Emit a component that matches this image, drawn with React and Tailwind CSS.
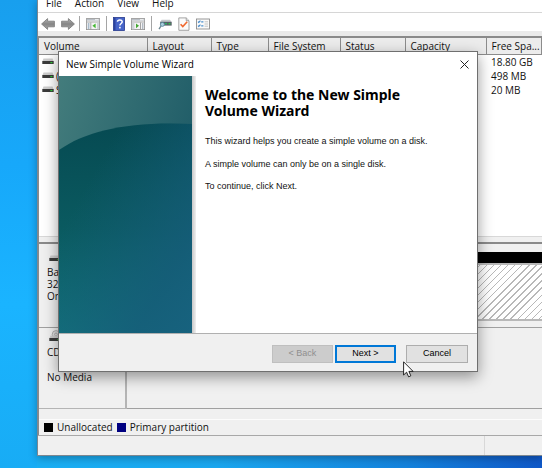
import React from "react";

const menus = ["File", "Action", "View", "Help"];

const columns = [
  { name: "Volume", width: "w-[108px]" },
  { name: "Layout", width: "w-[64px]" },
  { name: "Type", width: "w-[57px]" },
  { name: "File System", width: "w-[72px]" },
  { name: "Status", width: "w-[65px]" },
  { name: "Capacity", width: "w-[81px]" },
  { name: "Free Spa...", width: "w-auto" },
];

const volumes = [
  { name: "", free: "18.80 GB" },
  { name: "(", free: "498 MB" },
  { name: "S", free: "20 MB" },
];

function Arrow({ flip }) {
  return (
    <svg viewBox="0 0 14 12" className={flip ? "h-3 w-3.5 -scale-x-100" : "h-3 w-3.5"}>
      <defs>
        <linearGradient id="arrowFill" x1="0" y1="0" x2="0" y2="1">
          <stop offset="0" stopColor="#b5b5b5" />
          <stop offset="0.5" stopColor="#858585" />
          <stop offset="1" stopColor="#a8a8a8" />
        </linearGradient>
      </defs>
      <path d="M0.6 6 6.6 0.6V3.2H13.4V8.8H6.6V11.4Z" fill="url(#arrowFill)" stroke="#808080" strokeWidth="0.9" strokeLinejoin="round" />
    </svg>
  );
}

function PaneIcon({ right }) {
  return (
    <svg viewBox="0 0 14 12" className="h-3 w-3.5">
      <rect x="0.4" y="0.6" width="13.2" height="11" fill="#f4f4f4" stroke="#8f8f8f" strokeWidth="0.8" />
      <rect x="0.8" y="1" width="12.4" height="1.6" fill="#b9bfc6" />
      <rect x="9" y="1.2" width="3.6" height="0.9" fill="#f5f5f5" />
      <path d="M0.8 4H13.2" stroke="#9c9c9c" strokeWidth="0.8" />
      {right ? (
        <g>
          <path d="M9.5 4.5V11.4" stroke="#8f8f8f" strokeWidth="0.8" />
          <path d="M11 6H12.4M11 8H12.4M11 10H12.4" stroke="#6e7f92" />
          <rect x="1" y="4.5" width="2.5" height="6.8" fill="#cfd3d8" />
          <path d="M5 5.4 8 7.8 5 10.2Z" fill="#44a832" />
        </g>
      ) : (
        <g>
          <path d="M4.8 4.5V11.4" stroke="#8f8f8f" strokeWidth="0.8" />
          <path d="M1.8 6H3.4M1.8 8H3.4M1.8 10H3.4" stroke="#5f83a5" />
          <rect x="11" y="4.5" width="2" height="6.8" fill="#cfd3d8" />
          <path d="M9.6 5.4 6.4 7.8 9.6 10.2Z" fill="#44b832" />
        </g>
      )}
    </svg>
  );
}

function HelpIcon() {
  return (
    <svg viewBox="0 0 12 14" className="h-3.5 w-3">
      <rect x="0.5" y="0.5" width="11" height="13" fill="#4664c8" stroke="#26398c" strokeWidth="0.8" />
      <rect x="0.8" y="0.8" width="1.7" height="12.4" fill="#2b429f" />
      <path d="M4.5 4.8C4.5 2.4 9.2 2.2 9.2 4.8 9.2 6.6 6.9 6.4 6.9 8.6" fill="none" stroke="#fff" strokeWidth="1.5" />
      <rect x="6.1" y="9.8" width="1.6" height="1.6" fill="#fff" />
    </svg>
  );
}

function RescanIcon() {
  return (
    <svg viewBox="0 0 14 12" className="h-3 w-3.5">
      <path d="M3.6 1.8H12L13.6 4H2.2Z" fill="#c3c8cb" />
      <rect x="2.2" y="3.8" width="11.5" height="3.8" fill="#566168" />
      <rect x="7" y="5" width="2" height="1.4" fill="#2fae62" />
      <rect x="10.6" y="5" width="1.8" height="1.4" fill="#33c545" />
      <circle cx="4.4" cy="6.4" r="2" fill="#a9d0df" stroke="#55879b" strokeWidth="0.8" />
      <path d="M3 8 1 11.2" stroke="#6c8792" strokeWidth="1.4" />
    </svg>
  );
}

function CheckPage() {
  return (
    <svg viewBox="0 0 12 14" className="h-3.5 w-3">
      <path d="M0.8 0.9H8.2L11 3.7V13.3H0.8Z" fill="#fbfbfb" stroke="#8d8d8d" strokeWidth="0.8" />
      <path d="M8.2 0.9V3.7H11" fill="#ddd" stroke="#8d8d8d" strokeWidth="0.7" />
      <path d="M2.6 7.2 4.8 9.6 9.2 4.8" fill="none" stroke="#f0692f" strokeWidth="1.6" />
    </svg>
  );
}

function ListIcon() {
  return (
    <svg viewBox="0 0 14 12" className="h-3 w-3.5">
      <rect x="0.5" y="1" width="13" height="10" fill="#fafafa" stroke="#8e8e8e" strokeWidth="0.9" />
      <path d="M2 3.6 2.8 4.5 4.4 2.6M2 7.6 2.8 8.5 4.4 6.6" fill="none" stroke="#3c84c8" strokeWidth="1.1" />
      <path d="M5.2 3.8H7.4M5.2 7.8H7.4" stroke="#4b8fcc" strokeWidth="1.2" />
      <path d="M8.6 3.8H12M8.6 6H12M8.6 8.2H12" stroke="#b5b5b5" strokeWidth="0.8" />
    </svg>
  );
}

function DriveIcon({ disc }) {
  return (
    <svg viewBox="0 0 12 10" className="h-2.5 w-3 shrink-0 overflow-visible">
      {disc && (
        <g fill="none" stroke="#9a9a9a" strokeWidth="0.7">
          <circle cx="7" cy="0.4" r="3.8" fill="#e0e0e0" />
          <circle cx="7" cy="0.4" r="1.4" />
        </g>
      )}
      <path d="M1.5 1.6H10.5L11.6 4.2H0.4Z" fill="#cdcdcd" />
      <rect x="0.3" y="4" width="11.4" height="3" fill="#3b3b3b" />
      <rect x="8.4" y="5" width="2" height="1.2" fill="#2fd03a" />
    </svg>
  );
}

function Divider() {
  return <span className="h-4 w-px bg-[#a5a5a5]" />;
}

function ToolButton({ label, children }) {
  return (
    <button type="button" aria-label={label} className="flex h-4 items-center">
      {children}
    </button>
  );
}

function Toolbar() {
  return (
    <div className="flex h-[18px] items-center bg-white pt-1 pl-[3px]">
      <div className="flex items-center gap-1.5">
        <ToolButton label="Back"><Arrow /></ToolButton>
        <ToolButton label="Forward"><Arrow flip /></ToolButton>
      </div>
      <div className="flex items-center gap-1.5 pl-1">
        <Divider />
        <ToolButton label="Show console tree"><PaneIcon /></ToolButton>
        <Divider />
        <ToolButton label="Help"><HelpIcon /></ToolButton>
        <ToolButton label="Show action pane"><PaneIcon right /></ToolButton>
      </div>
      <div className="flex items-center gap-1.5 pl-1.5">
        <Divider />
        <ToolButton label="Rescan disks"><RescanIcon /></ToolButton>
        <ToolButton label="Check"><CheckPage /></ToolButton>
        <ToolButton label="Properties"><ListIcon /></ToolButton>
      </div>
    </div>
  );
}

function VolumeTable() {
  return (
    <table className="w-full table-fixed border-collapse text-left leading-[14px]">
      <thead>
        <tr className="h-4 bg-[#ececec]">
          {columns.map((c) => (
            <th key={c.name} className={`${c.width} overflow-hidden border-r border-b border-[#8c8c8c] p-0 pl-[5px] font-normal whitespace-nowrap`}>
              {c.name}
            </th>
          ))}
        </tr>
      </thead>
      <tbody>
        {volumes.map((v) => (
          <tr key={v.free}>
            <td className="p-0 pl-[3px]">
              <span className="flex items-center gap-0.5">
                <DriveIcon />
                {v.name}
              </span>
            </td>
            <td colSpan={5} />
            <td className="p-0 pl-[5px] whitespace-nowrap">{v.free}</td>
          </tr>
        ))}
      </tbody>
    </table>
  );
}

function DiskPane() {
  return (
    <div className="flex flex-1 flex-col border-t-2 border-[#8a8a8a] bg-[#f0f0f0]">
      <div className="flex h-[84px] border-b border-[#a0a0a0]">
        <div className="w-[88px] shrink-0 pt-2.5 pl-2">
          <span className="flex pl-0.5"><DriveIcon /></span>
          <div className="pt-0.5 leading-3">
            <p>Bas</p>
            <p>32.</p>
            <p>On</p>
          </div>
        </div>
        <div className="flex flex-1 flex-col pt-2">
          <div className="h-[11px] bg-black" />
          <div className="h-[58px] border-y-2 border-[#b8b8b8] bg-[repeating-linear-gradient(135deg,#fff_0_4px,#b8b8b8_4px_5px)]" />
        </div>
      </div>
      <div className="flex h-[81px]">
        <div className="w-[88px] shrink-0 border-r-2 border-b border-[#b4b4b4] pt-1.5 pl-2">
          <span className="flex pl-0.5"><DriveIcon disc /></span>
          <p className="pt-0.5 leading-3">CD</p>
          <p className="pt-[13px] leading-3">No Media</p>
        </div>
        <div className="flex-1 border-b border-[#a0a0a0]" />
      </div>
      <div className="mt-2.5 flex flex-1 items-center gap-1 border-t border-[#fcfcfc] pl-[5px]">
        <span className="size-[9px] bg-black" />
        <span>Unallocated</span>
        <span className="size-[9px] bg-[#000080]" />
        <span>Primary partition</span>
      </div>
    </div>
  );
}

function WizardArt() {
  return (
    <svg viewBox="0 0 133 257" preserveAspectRatio="none" className="w-[133px] shrink-0" aria-hidden="true">
      <defs>
        <linearGradient id="artTop" x1="0" y1="0" x2="1" y2="0.5">
          <stop offset="0" stopColor="#437c7c" />
          <stop offset="1" stopColor="#1d5a66" />
        </linearGradient>
        <linearGradient id="artBase" x1="0" y1="0" x2="0" y2="1">
          <stop offset="0" stopColor="#064a52" />
          <stop offset="0.5" stopColor="#0a5a60" />
          <stop offset="1" stopColor="#12727a" />
        </linearGradient>
        <linearGradient id="artRight" x1="0.2" y1="0.3" x2="1" y2="1">
          <stop offset="0" stopColor="#165c7a" stopOpacity="0" />
          <stop offset="0.7" stopColor="#165c7a" stopOpacity="0.8" />
          <stop offset="1" stopColor="#17627e" />
        </linearGradient>
      </defs>
      <rect width="133" height="257" fill="url(#artTop)" />
      <path d="M0 74C28 54 72 45 133 48V257H0Z" fill="url(#artBase)" />
      <path d="M0 74C28 54 72 45 133 48V257H0Z" fill="url(#artRight)" />
    </svg>
  );
}

function Wizard() {
  return (
    <section
      role="dialog"
      aria-labelledby="wizard-title"
      className="absolute top-[51px] left-[58px] flex w-[420px] flex-col border border-[#6f6f6f] bg-white shadow-[0_5px_14px_rgba(0,0,0,0.4)]"
    >
      <header className="flex h-6 items-center justify-between pr-2 pl-[7px]">
        <h1 id="wizard-title" className="text-[10px] text-black">New Simple Volume Wizard</h1>
        <button type="button" aria-label="Close">
          <svg viewBox="0 0 9 9" className="size-[9px]">
            <path d="M0.5 0.5 8.5 8.5M8.5 0.5 0.5 8.5" stroke="#222" strokeWidth="1" />
          </svg>
        </button>
      </header>
      <div className="flex h-[258px] border-b border-[#b0b0b0]">
        <WizardArt />
        <div className="w-1 shrink-0 bg-linear-to-r from-[#c8c8c8] to-[#f0f0f0]" />
        <div className="flex-1 pt-[11px] pl-[9px] font-['Liberation_Sans',Arial,sans-serif] text-[9px] leading-3 text-[#111]">
          <h2 className="w-[216px] font-['Noto_Sans','Open_Sans',sans-serif] text-[14px] leading-4 font-bold text-black">
            Welcome to the New Simple Volume Wizard
          </h2>
          <p className="pt-4">This wizard helps you create a simple volume on a disk.</p>
          <p className="pt-[11px]">A simple volume can only be on a single disk.</p>
          <p className="pt-2.5">To continue, click Next.</p>
        </div>
      </div>
      <footer className="flex h-[37px] items-center justify-end bg-[#f0f0f0] pt-[3px] pr-[9px] font-['Liberation_Sans',Arial,sans-serif] text-[9px]">
        <button type="button" disabled className="h-[18px] w-[61px] border border-[#bfbfbf] bg-[#cccccc] text-[#8f8f8f]">&lt; Back</button>
        <button type="button" className="ml-0.5 h-[18px] w-[61px] border-2 border-[#0078d7] bg-[#e1e1e1] text-black">Next &gt;</button>
        <button type="button" className="ml-2.5 h-[18px] w-[62px] border border-[#adadad] bg-[#e1e1e1] text-black">Cancel</button>
      </footer>
    </section>
  );
}

export default function App() {
  return (
    <main className="relative flex min-h-screen flex-col overflow-hidden bg-[linear-gradient(90deg,#1ab0f4_0%,#1aa6ee_40%,#1482dc_75%,#0f58c8_100%)] font-['Open_Sans','Noto_Sans',sans-serif] text-[10px] text-[#111]">
      <div className="absolute inset-y-0 left-0 w-[37px] bg-[linear-gradient(180deg,#189fee_0%,#17a8fa_35%,#1ab4ff_65%,#18acf5_100%)]" />
      <div className="relative ml-[37px] flex min-h-[456px] flex-col border-b border-l border-[#7d8790] bg-[#f0f0f0] shadow-[0_2px_8px_rgba(0,0,0,0.3)]">
        <nav className="flex h-3 items-start gap-[13px] bg-white pl-2">
          {menus.map((m) => (
            <button key={m} type="button" className="-mt-[3px] h-3 leading-3">{m}</button>
          ))}
        </nav>
        <div className="h-px bg-[#d6d6d6]" />
        <Toolbar />
        <div className="h-[5px] bg-[#eaeaea]" />
        <div className="flex flex-1 flex-col border-t-2 border-l border-[#8a8a8a]">
          <div className="h-[198px] bg-white">
            <VolumeTable />
          </div>
          <div className="h-1.5 border-t border-[#d8d8d8] bg-[#f0f0f0]" />
          <DiskPane />
        </div>
        <div className="flex h-5 justify-end border-t border-[#a8a8a8]">
          <div className="w-[58px] border-l border-[#d8d8d8]" />
        </div>
      </div>
      <Wizard />
      <svg viewBox="0 0 12 18" className="absolute top-[361px] left-[403px] h-[18px] w-3" aria-hidden="true">
        <path d="M0.6 0.8V14L3.6 11.2 5.6 15.8 7.8 14.8 5.9 10.4H10.1Z" fill="#fff" stroke="#111" strokeWidth="0.9" />
      </svg>
    </main>
  );
}
